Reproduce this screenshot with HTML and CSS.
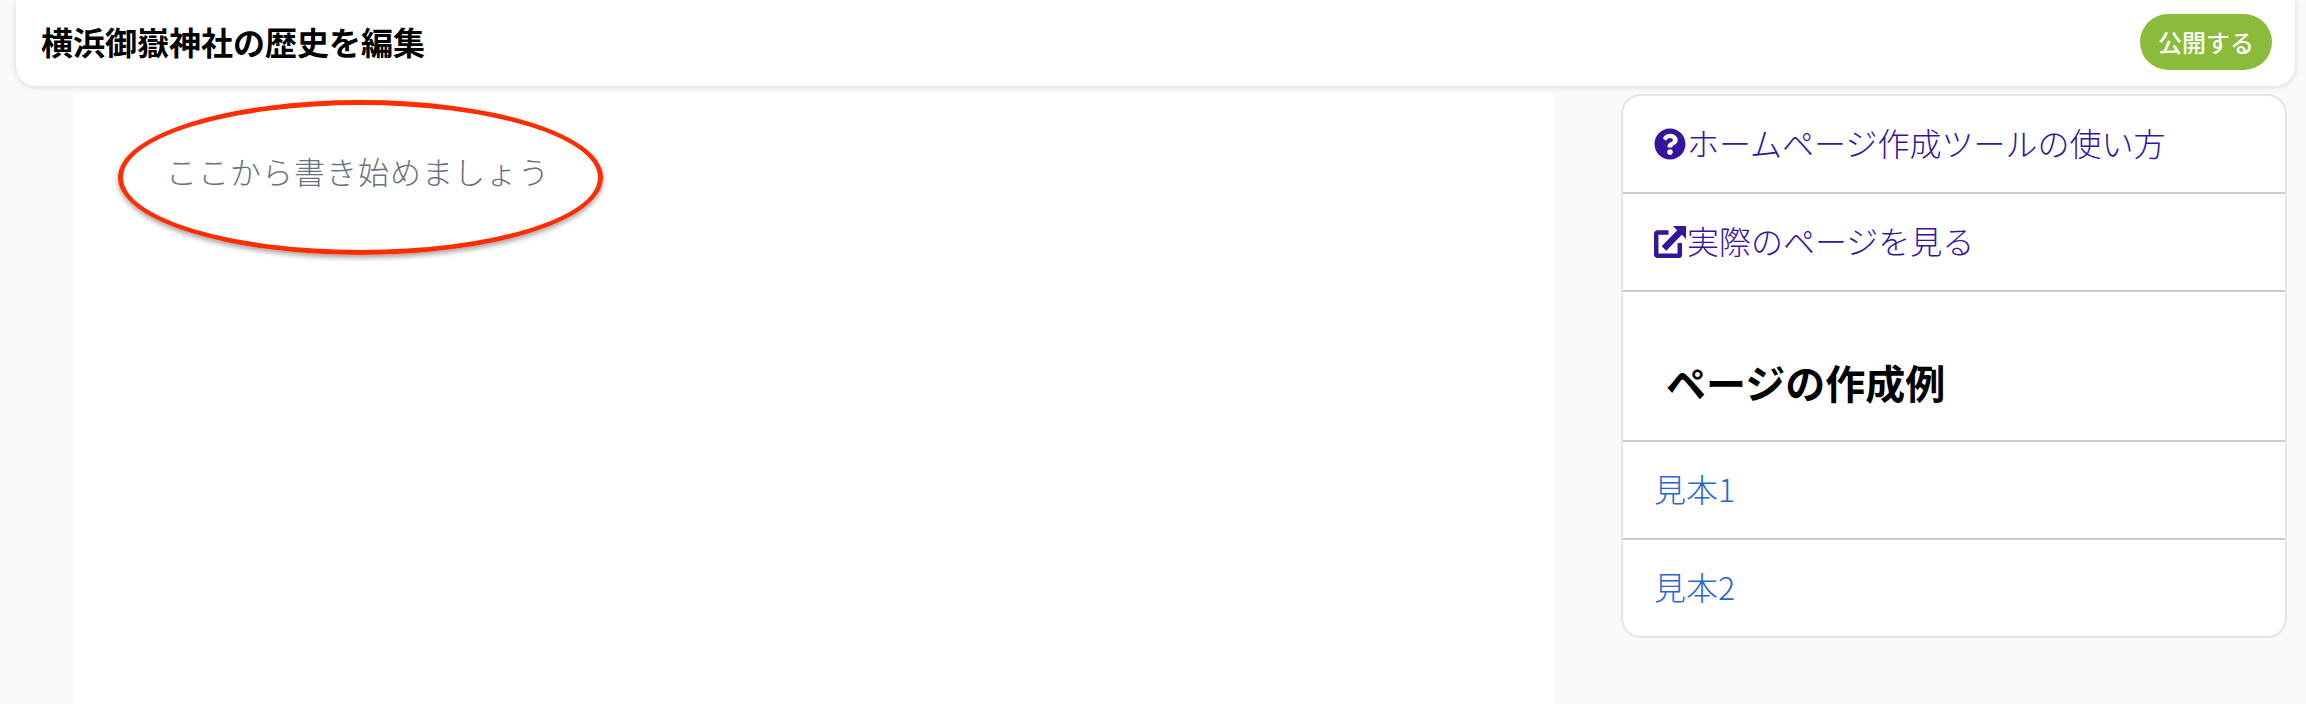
FILE: index.html
```html
<!DOCTYPE html>
<html lang="ja">
<head>
    <meta charset="UTF-8">
    <meta name="viewport" content="width=device-width, initial-scale=1.0">
    <title>横浜御嶽神社の歴史を編集</title>
    <link rel="stylesheet" href="styles.css">
</head>
<body>
    <header class="top-bar">
        <h1 class="page-title">横浜御嶽神社の歴史を編集</h1>
        <button class="publish-button">公開する</button>
    </header>

    <div class="content">
        <main class="editor">
            <p class="placeholder">ここから書き始めましょう</p>
            <!-- red annotation circled over the placeholder -->
            <div class="annotation"></div>
        </main>

        <aside class="side-panel">
            <a class="panel-row help-link" href="#">
                <svg class="row-icon" viewBox="0 0 512 512"><path fill="currentColor" d="M504 256c0 136.997-111.043 248-248 248S8 392.997 8 256C8 119.083 119.043 8 256 8s248 111.083 248 248zM262.655 90c-54.497 0-89.255 22.957-116.549 63.758-3.536 5.286-2.353 12.415 2.715 16.258l34.699 26.31c5.205 3.947 12.621 3.008 16.665-2.122 17.864-22.658 30.113-35.797 57.303-35.797 20.429 0 45.698 13.148 45.698 32.958 0 14.976-12.363 22.667-32.534 33.976C247.128 238.528 216 254.941 216 296v4c0 6.627 5.373 12 12 12h56c6.627 0 12-5.373 12-12v-1.333c0-28.462 83.186-29.647 83.186-106.667 0-58.002-60.165-102-116.531-102zM256 338c-25.365 0-46 20.635-46 46 0 25.364 20.635 46 46 46s46-20.636 46-46c0-25.365-20.635-46-46-46z"/></svg>ホームページ作成ツールの使い方
            </a>
            <a class="panel-row help-link" href="#">
                <svg class="row-icon" viewBox="0 0 32 32"><path fill="none" stroke="currentColor" stroke-width="4.5" d="M14.500 6.500H3.500a1.300 1.300 0 0 0-1.300 1.300V28.500a1.300 1.300 0 0 0 1.300 1.300H24.500a1.300 1.300 0 0 0 1.300-1.300V17"/><path fill="currentColor" d="M19 0H32V13L27.800 8.800 12.300 24.800 7.700 20.200 23.200 4.200z"/></svg>実際のページを見る
            </a>
            <h2 class="panel-heading">ページの作成例</h2>
            <a class="panel-row sample-link" href="#">見本1</a>
            <a class="panel-row sample-link" href="#">見本2</a>
        </aside>
    </div>
</body>
</html>
```

FILE: styles.css
```css
body {
    margin: 0;
    height: 704px;
    overflow: hidden;
    background-color: #fafafa;
    font-family: "Noto Sans CJK JP", "Noto Sans", sans-serif;
}

.top-bar {
    display: flex;
    justify-content: space-between;
    align-items: center;
    height: 86px;
    margin: 0 11px 8px 16px;
    padding: 0 23px 2px 25px;
    box-sizing: border-box;
    background-color: #fff;
    border-radius: 0 0 20px 20px;
    box-shadow: 0 1px 6px rgba(0, 0, 0, 0.14);
}
.page-title {
    margin: 0 0 2px;
    font-size: 32px;
    font-weight: 700;
    color: #000;
}
.publish-button {
    width: 132px;
    height: 56px;
    padding: 0 0 2px;
    border: none;
    border-radius: 28px;
    background-color: #8abb3a;
    color: #fff;
    font-family: inherit;
    font-size: 24px;
    font-weight: 500;
}

.content {
    display: flex;
    align-items: flex-start;
    gap: 67px;
    padding: 0 19px 0 74px;
}

.editor {
    position: relative;
    flex: none;
    width: 1480px;
    height: 610px;
    padding: 53px 92px 0;
    box-sizing: border-box;
    background-color: #fff;
}
.placeholder {
    margin: 0;
    font-size: 31px;
    line-height: 48px;
    letter-spacing: 1px;
    font-weight: 300;
    color: #6b7182;
}
.annotation {
    position: absolute;
    left: 44px;
    top: 6px;
    width: 485px;
    height: 155px;
    box-sizing: border-box;
    border: 5px solid #ff2d00;
    border-radius: 50%;
    box-shadow: 0 3px 5px rgba(0, 0, 0, 0.35);
}

.side-panel {
    flex: none;
    width: 666px;
    box-sizing: border-box;
    background-color: #fff;
    border: 2px solid #e5e5e5;
    border-radius: 20px;
}
.panel-row {
    display: flex;
    align-items: center;
    height: 92px;
    padding: 0 31px 4px;
    font-size: 32px;
    font-weight: 300;
    text-decoration: none;
    border-bottom: 2px solid #cccccc;
}
.panel-row:last-child {
    border-bottom: none;
}
.help-link {
    color: #35159c;
}
.sample-link {
    color: #2a66d0;
}
.row-icon {
    flex: none;
    width: 32px;
    height: 32px;
    margin: 4px 1px 0 0;
}
.panel-heading {
    display: flex;
    align-items: center;
    height: 150px;
    margin: 0;
    padding: 32px 43px 0;
    box-sizing: border-box;
    font-size: 40px;
    font-weight: 700;
    color: #000;
    border-bottom: 2px solid #cccccc;
}
```
